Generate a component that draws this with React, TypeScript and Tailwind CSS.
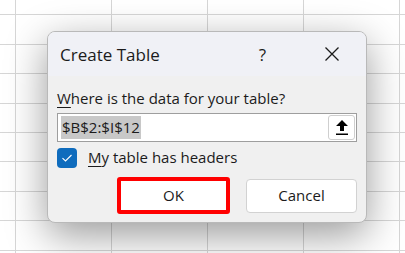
import React from "react";

const font = { fontFamily: '"Open Sans", "Noto Sans", sans-serif' };

function Sheet() {
  const rows = Array.from({ length: 10 });
  const cols = Array.from({ length: 6 });
  return (
    <div className="flex flex-col -mt-[14px] -ml-[80px]">
      {rows.map((_, r) => (
        <div key={r} className="flex h-[29.4px] shrink-0">
          {cols.map((_, c) => (
            <div key={c} className="w-[96px] shrink-0 border-r border-b border-[#d6d6d6]" />
          ))}
        </div>
      ))}
    </div>
  );
}

export default function App() {
  return (
    <div className="relative w-[405px] h-[253px] overflow-hidden bg-white" style={font}>
      <Sheet />
      <div className="absolute left-[47px] top-[31px] w-[320px] h-[192px] rounded-[8px] border border-[#b9b9b9] bg-[#f0f0f0] overflow-hidden shadow-[0_12px_40px_rgba(0,0,0,0.4)] flex flex-col text-[#1b1b1b]">
        <div className="h-[44px] shrink-0 bg-[#f0f1f6] flex items-center pl-[12px]">
          <span className="text-[17px] leading-none">Create Table</span>
          <span className="ml-auto text-[17px] leading-none">?</span>
          <svg className="ml-[58px] mr-[26px]" width="16" height="16" viewBox="0 0 16 16">
            <path d="M1.5 1.5 L14.5 14.5 M14.5 1.5 L1.5 14.5" stroke="#1b1b1b" strokeWidth="1.3" fill="none" />
          </svg>
        </div>
        <div className="flex flex-col px-[9px] pt-[12px]">
          <div className="text-[15px] leading-[20px] h-[20px]">
            <span className="underline underline-offset-[3px] decoration-[1px]">W</span>here is the data for your table?
          </div>
          <div className="mt-[5px] h-[29px] w-[300px] border border-[#9e9e9e] bg-white flex items-center pl-[3px] pr-[1px]">
            <span className="bg-[#c8c8c8] text-[15px] leading-[23px] px-[1px]">$B$2:$I$12</span>
            <div className="ml-auto w-[27px] h-[25px] rounded-[3px] border border-[#cfcfcf] bg-white flex items-center justify-center">
              <svg width="14" height="17" viewBox="0 0 14 17">
                <path d="M7 1 L13 7 L9 7 L9 12 L5 12 L5 7 L1 7 Z" fill="#000" />
                <rect x="1" y="14.5" width="12" height="1.5" fill="#000" />
              </svg>
            </div>
          </div>
          <div className="mt-[6px] flex items-center h-[19px]">
            <div className="w-[20px] h-[20px] rounded-[4px] bg-[#0f6cbd] flex items-center justify-center">
              <svg width="12" height="10" viewBox="0 0 12 10">
                <path d="M1.5 5.2 L4.5 8 L10.5 2" stroke="#fff" strokeWidth="1.1" fill="none" />
              </svg>
            </div>
            <span className="ml-[11px] text-[15px] leading-none">
              <span className="underline underline-offset-[3px] decoration-[1px]">M</span>y table has headers
            </span>
          </div>
          <div className="mt-[10px] flex items-center">
            <div className="ml-[60px] w-[113px] h-[37px] border-[4px] border-[#ff0000] rounded-[3px] bg-white flex items-center justify-center text-[15px]">
              OK
            </div>
            <div className="ml-[16px] w-[111px] h-[34px] rounded-[4px] border border-[#d2d2d2] bg-white flex items-center justify-center text-[15px]">
              Cancel
            </div>
          </div>
        </div>
      </div>
    </div>
  );
}
